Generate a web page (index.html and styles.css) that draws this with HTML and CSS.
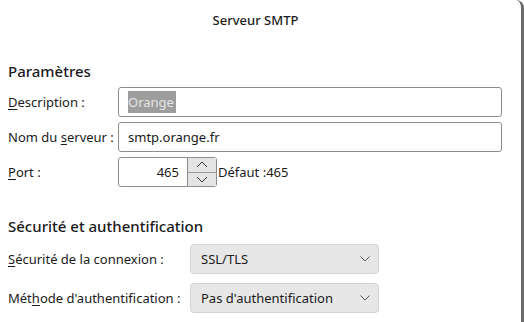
FILE: index.html
```html
<!DOCTYPE html>
<html lang="fr">
<head>
    <meta charset="UTF-8">
    <meta name="viewport" content="width=device-width, initial-scale=1.0">
    <title>Serveur SMTP</title>
    <link rel="stylesheet" href="styles.css">
</head>
<body>
    <div class="window">
        <div class="titlebar">Serveur SMTP</div>

        <div class="content">
            <h2 class="section">Paramètres</h2>
            <div class="form form-server">
                <label class="label"><u>D</u>escription :</label>
                <div class="field"><span class="selected">Orange</span></div>

                <label class="label">Nom du <u>s</u>erveur :</label>
                <div class="field">smtp.orange.fr</div>

                <label class="label"><u>P</u>ort :</label>
                <div class="port-row">
                    <div class="field port">
                        <span class="port-value">465</span>
                        <div class="spin">
                            <div class="spin-btn">
                                <svg width="12" height="7" viewBox="0 0 12 7"><polyline points="1,6 6,1 11,6" fill="none" stroke="#333" stroke-width="1"/></svg>
                            </div>
                            <div class="spin-btn">
                                <svg width="12" height="7" viewBox="0 0 12 7"><polyline points="1,1 6,6 11,1" fill="none" stroke="#333" stroke-width="1"/></svg>
                            </div>
                        </div>
                    </div>
                    <span class="default">Défaut :465</span>
                </div>
            </div>

            <h2 class="section section-2">Sécurité et authentification</h2>
            <div class="form form-security">
                <label class="label"><u>S</u>écurité de la connexion :</label>
                <div class="select">
                    <span>SSL/TLS</span>
                    <svg width="10" height="6" viewBox="0 0 10 6"><polyline points="0.5,0.5 5,5 9.5,0.5" fill="none" stroke="#555" stroke-width="1"/></svg>
                </div>

                <label class="label">Mét<u>h</u>ode d'authentification :</label>
                <div class="select">
                    <span>Pas d'authentification</span>
                    <svg width="10" height="6" viewBox="0 0 10 6"><polyline points="0.5,0.5 5,5 9.5,0.5" fill="none" stroke="#555" stroke-width="1"/></svg>
                </div>

                <label class="label"></label>
                <div class="select"></div>
            </div>
        </div>
    </div>
</body>
</html>
```

FILE: styles.css
```css
body {
    margin: 0;
    background-color: white;
    font-family: "Noto Sans", "Open Sans", sans-serif;
    color: #1b1b1b;
    overflow: hidden;
}
.window {
    width: 521px;
    height: 322px;
    overflow: hidden;
    border-right: 3px solid #6b6b6b;
    border-top-right-radius: 8px;
    background-color: white;
}
.titlebar {
    height: 40px;
    line-height: 40px;
    text-align: center;
    font-size: 13px;
    font-weight: 500;
    padding-right: 10px;
}
.content {
    padding: 0 8px;
}
.section {
    margin: 21px 0 6px;
    height: 20px;
    line-height: 20px;
    font-size: 15px;
    font-weight: 500;
}
.section-2 {
    margin-top: 29px;
    margin-bottom: 8px;
}
.form {
    display: grid;
    align-items: center;
}
.form-server {
    grid-template-columns: 110px 384px;
    row-gap: 5px;
}
.form-security {
    grid-template-columns: 182px 189px;
    row-gap: 9px;
}
.label {
    font-size: 13px;
}
.label u {
    text-underline-offset: 2px;
}
.field {
    box-sizing: border-box;
    height: 30px;
    border: 1px solid #8d8d8d;
    border-radius: 3px;
    display: flex;
    align-items: center;
    padding: 0 9px;
    font-size: 13px;
}
.selected {
    background-color: #9d9d9d;
    color: #e4e4e4;
    line-height: 22px;
    padding-right: 2px;
}
.port-row {
    display: flex;
    align-items: center;
}
.port {
    width: 99px;
    padding: 0;
    justify-content: flex-end;
}
.port-value {
    padding-right: 8px;
}
.spin {
    display: flex;
    flex-direction: column;
    width: 28px;
    height: 28px;
    border-left: 1px solid #8d8d8d;
}
.spin-btn {
    flex: 1;
    background-color: #e4e4e4;
    display: flex;
    justify-content: center;
    align-items: center;
}
.spin-btn + .spin-btn {
    border-top: 1px solid #9a9a9a;
}
.default {
    font-size: 13px;
    margin-left: 1px;
}
.select {
    box-sizing: border-box;
    height: 30px;
    border: 1px solid #d3d3d3;
    border-radius: 4px;
    background-color: #e7e7e7;
    display: flex;
    align-items: center;
    justify-content: space-between;
    padding: 0 8px 0 10px;
    font-size: 13px;
}
```
